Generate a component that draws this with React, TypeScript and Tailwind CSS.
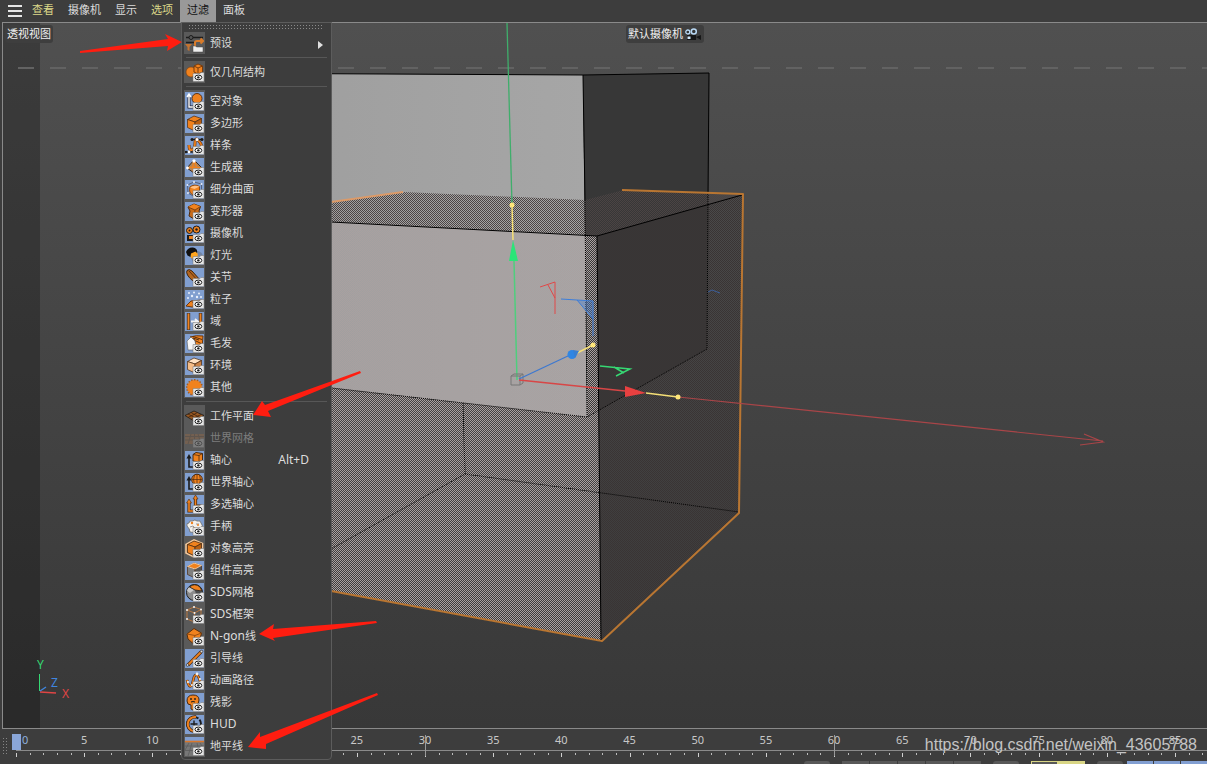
import type { ReactNode } from "react";
import { clsx } from "clsx";

const O = "#f0821e";
const D = "#7a3c0c";
const K = "#1c1c1c";

type Item = {
  label: string;
  latin?: string;
  icon: ReactNode;
  plain?: boolean;
  disabled?: boolean;
  shortcut?: string;
  submenu?: boolean;
};

/* Small eye plate in the corner of every filter icon */
function Eye() {
  return (
    <g>
      <path d="M8 10.5H15L16 9.5H19V18.5H8Z" fill="#e6e6e6" stroke="#777" strokeWidth=".5" />
      <ellipse cx="13.4" cy="14.4" rx="3.4" ry="2.3" fill="#fff" stroke={K} strokeWidth="1" />
      <circle cx="13.4" cy="14.4" r="1.2" fill={K} />
    </g>
  );
}

function Cube({ top = O, left = O, right = "#b85f12" }: { top?: string; left?: string; right?: string }) {
  return (
    <g stroke="#4a2a10" strokeWidth=".7" strokeLinejoin="round">
      <path d="M2.5 5.5 9 2l7.5 2.5L10 8Z" fill={top} />
      <path d="M2.5 5.5 10 8v9L2.5 13.5Z" fill={left} />
      <path d="M10 8l6.5-3.5V13L10 17Z" fill={right} />
    </g>
  );
}

const axisArrow = (
  <g>
    <path d="M4 6V16H9" fill="none" stroke={K} strokeWidth="1.6" />
    <path d="M4 3 1.5 7.5h5Z" fill={K} />
  </g>
);

const groups: Item[][] = [
  [
    {
      label: "预设",
      plain: true,
      submenu: true,
      icon: (
        <g>
          <path d="M1 3.5h17M1 8.5h8" stroke={K} strokeWidth="1.6" />
          <circle cx="6" cy="3.5" r="2" fill="#555" stroke={K} />
          <path d="M0 10h7l-2.5 3v4l-2-1v-3Z" fill="#c47331" />
          <path d="M10 12V8.5Q10 7 12 7h6M15.5 4.5 18 7l-2.5 2.5" fill="none" stroke="#d87b2a" strokeWidth="2" />
          <path d="M8 18V12h2.5l1 1H18v5Z" fill="#eee" stroke="#444" strokeWidth=".5" />
        </g>
      ),
    },
  ],
  [
    {
      label: "仅几何结构",
      plain: true,
      icon: (
        <g>
          <circle cx="6" cy="9" r="5" fill={O} stroke={D} strokeWidth=".6" />
          <path d="M9 3l4-2 4.5 2v6L13 11 9 9Z" fill={O} stroke={D} />
          <path d="M9 3l4 2 4.5-2M13 5v5" stroke={D} fill="none" />
          <Eye />
        </g>
      ),
    },
  ],
  [
    {
      label: "空对象",
      icon: (
        <g>
          <path d="M4 4v11h5" fill="none" stroke="#223" strokeWidth="3" />
          <path d="M4 3v12h5M2 5l2-3 2 3" fill="none" stroke="#fff" strokeWidth="1.4" />
          <circle cx="12" cy="6.5" r="5" fill={O} stroke="#5b3417" />
          <Eye />
        </g>
      ),
    },
    { label: "多边形", icon: <g><Cube /><Eye /></g> },
    {
      label: "样条",
      icon: (
        <g>
          <path d="M4 9q0 6 3 5t3-7 3-3 4 7" fill="none" stroke={D} strokeWidth="3" />
          <path d="M4 9q0 6 3 5t3-7 3-3 4 7" fill="none" stroke={O} strokeWidth="1.7" />
          <path d="M7 3.5h10M0 16h8" stroke={K} strokeWidth="1.3" />
          <circle cx="7" cy="3.5" r="1.5" fill={K} />
          <circle cx="17" cy="3.5" r="1.5" fill={K} />
          <circle cx="12" cy="3.5" r="1.5" fill="#fff" />
          <circle cx="4" cy="16" r="1.4" fill="#fff" />
          <circle cx="1" cy="16" r="1.3" fill={K} />
          <Eye />
        </g>
      ),
    },
    {
      label: "生成器",
      icon: (
        <g>
          <path d="M9 2 2 10l7 5 8-5Z" fill="#ad875f" stroke="#3c2a1a" />
          <path d="M9 2 7.5 10 9 15M9 2l3 8 4 0M2 10l6-1 7 1" stroke={O} strokeWidth="1.5" fill="none" />
          <circle cx="9" cy="3" r="1.7" fill="#fff" />
          <circle cx="2.5" cy="10" r="1.4" fill="#fff" />
          <Eye />
        </g>
      ),
    },
    {
      label: "细分曲面",
      icon: (
        <g>
          <path d="M2.5 5 9 2l7.5 2v9L10 17l-7-4Z" fill="none" stroke="#52617f" />
          <path d="M5 7q4-3.5 9.5-.5V13L9 15.5Q3 13 5 7" fill={O} stroke="#8b4a17" />
          <path d="M5 7.5q4-3 9.5-1L9.5 9Z" fill="#ffc083" />
          <g fill="#e8eefa"><circle cx="2.5" cy="5" r="1" /><circle cx="9" cy="2" r="1" /><circle cx="16.5" cy="4" r="1" /><circle cx="3" cy="13" r="1" /></g>
          <Eye />
        </g>
      ),
    },
    {
      label: "变形器",
      icon: (
        <g>
          <path d="M3 5l6-3 6.5 2.5L14 9l1.5 5L9 17l-5-3 1-5Z" fill="#c96b18" stroke="#4a2a10" />
          <path d="M3 5l6-3 6.5 2.5L10 8Z" fill={O} />
          <path d="M3 5l7 3 5.5-3.5M10 8l-1 9" stroke="#6b370e" strokeWidth=".8" fill="none" />
          <Eye />
        </g>
      ),
    },
    {
      label: "摄像机",
      icon: (
        <g>
          <path d="M2 11h9v6H2Z" fill={K} />
          <path d="M12 12l6-2v5Z" fill={K} />
          <circle cx="4.500" cy="6.500" r="3" fill={O} stroke={K} />
          <circle cx="11.500" cy="5.500" r="3.500" fill={O} stroke={K} />
          <circle cx="4.500" cy="6.500" r="1" fill={K} />
          <circle cx="11.500" cy="5.500" r="1.200" fill={K} />
          <rect x="4" y="12" width="4" height="3" fill={O} />
          <Eye />
        </g>
      ),
    },
    {
      label: "灯光",
      icon: (
        <g>
          <circle cx="12" cy="11" r="6" fill="#555" opacity=".35" />
          <circle cx="9" cy="9" r="3.8" fill="#ffa51e" />
          <path d="M1 6Q3 1 8 1.5q5 1 4 5.5L10.500 5.500 6 7.500 5.500 11 2.500 9.500Z" fill="#111" />
          <Eye />
        </g>
      ),
    },
    {
      label: "关节",
      icon: (
        <g>
          <path d="M2 2.5Q4 .5 7 3l9 10-2 3Q6 13 2.5 7 1 4 2 2.5" fill="#b4661f" stroke="#3e2511" />
          <path d="M4 3l10 11" stroke="#5b2f0c" />
          <Eye />
        </g>
      ),
    },
    {
      label: "粒子",
      icon: (
        <g>
          <path d="M1 16l5-5 11-1v5l-10 2Z" fill={O} stroke="#6b370e" />
          <path d="M6 11l3 3-2 3" fill="none" stroke="#a45510" />
          <g fill="#e8effb">
            <circle cx="4" cy="3" r="1" /><circle cx="9" cy="2.5" r="1" /><circle cx="14" cy="3.5" r="1" />
            <circle cx="3" cy="8" r="1" /><circle cx="7" cy="6" r="1.2" /><circle cx="12" cy="7" r="1.2" /><circle cx="16" cy="7" r="1" />
          </g>
          <Eye />
        </g>
      ),
    },
    {
      label: "域",
      icon: (
        <g>
          <path d="M3.5 1v17M15.5 1v17" stroke="#40342c" strokeWidth="3.4" />
          <path d="M3.5 1.5v16M15.5 1.5v16" stroke={O} strokeWidth="1.8" />
          <path d="M6 9.5h7M10 7l3 2.5-3 2.5" stroke="#f2f2f2" strokeWidth="1.8" fill="none" />
          <Eye />
        </g>
      ),
    },
    {
      label: "毛发",
      icon: (
        <g>
          <path d="M5 3q6-2 13-1l-1 12-6 1-1-9Z" fill={O} stroke="#6b370e" />
          <path d="M8 4l6 2M8 2.5l9 3M11 7l6 3" stroke="#5b2f0c" />
          <path d="M2 7l4-4 4 4 1 5-3 4H3Z" fill="#f5f5f5" stroke="#555" strokeWidth=".6" />
          <Eye />
        </g>
      ),
    },
    { label: "环境", icon: <g><Cube top="#ffe3c4" left="#f5bd88" right="#c98348" /><Eye /></g> },
    {
      label: "其他",
      icon: (
        <g>
          <circle cx="9.5" cy="9.5" r="7.4" fill={O} />
          <circle cx="9.5" cy="9.5" r="7.8" fill="none" stroke="#a85c1c" strokeWidth="1.4" strokeDasharray="1.5 1.5" />
          <Eye />
        </g>
      ),
    },
  ],
  [
    {
      label: "工作平面",
      plain: true,
      icon: (
        <g>
          <path d="M0 8.5 9 4l10 4.5L9 14Z" fill="#9b5a23" stroke={K} strokeWidth=".8" />
          <path d="M3 7l9.5 5M6 5.5 15.5 11M3 10.5 12.5 5.5M6 12.5 16 7.5" stroke="#40230c" strokeWidth=".8" />
          <Eye />
        </g>
      ),
    },
    {
      label: "世界网格",
      plain: true,
      disabled: true,
      icon: (
        <g>
          <path d="M0 5h19v10H0Z" fill="#c07338" />
          <path d="M0 7.5h19M0 11h19M6 5 3 15M13 5l3 10M9.5 5v10" stroke="#6b4a2c" />
          <Eye />
        </g>
      ),
    },
    {
      label: "轴心",
      shortcut: "Alt+D",
      icon: (
        <g>
          {axisArrow}
          <path d="M8 3.5 11 1.5l6.5 1V9L14 11l-6-1Z" fill={O} stroke="#4a2a10" />
          <path d="M8 3.5l6 1 3.5-2M14 4.5V11" stroke="#4a2a10" strokeWidth=".8" fill="none" />
          <Eye />
        </g>
      ),
    },
    {
      label: "世界轴心",
      icon: (
        <g>
          {axisArrow}
          <circle cx="12" cy="6.5" r="5.3" fill={O} stroke="#4a2a10" />
          <path d="M7 6.5h10M12 1v11M9.5 2q-2 5 0 9M14.5 2q2 5 0 9" stroke="#4a2a10" strokeWidth=".7" fill="none" />
          <Eye />
        </g>
      ),
    },
    {
      label: "多选轴心",
      icon: (
        <g>
          <path d="M4 7v9h7M10.5 3v8H17" fill="none" stroke="#4a2a10" strokeWidth="3.2" />
          <path d="M1.5 8 4 4l2.5 4ZM8 4l2.5-4L13 4Z" fill={O} stroke="#4a2a10" strokeWidth=".6" />
          <path d="M4 7v9h7M10.5 3v8H17" fill="none" stroke={O} strokeWidth="1.6" />
          <Eye />
        </g>
      ),
    },
    {
      label: "手柄",
      icon: (
        <g>
          <path d="M2 9q-1-3 2-3 0-3 3.5-2Q10 2 12 4q4-1 4 2 2 2 1 5l-4 5-8-1q0-3-3-6" fill="#f4f1ec" stroke="#6a6a6a" strokeWidth=".8" />
          <path d="M5 10l3-1 2 2M11 7l3 0" stroke="#999" fill="none" />
          <circle cx="7" cy="6" r="1.2" fill={O} /><circle cx="13" cy="8" r="1" fill={O} /><circle cx="9" cy="11" r="1" fill={O} />
          <Eye />
        </g>
      ),
    },
    {
      label: "对象高亮",
      plain: true,
      icon: (
        <g>
          <path d="M1 5.5 9 1l8.5 3.5V14L10 18.5 1 14Z" fill="none" stroke="#f3c79a" strokeWidth="1.6" />
          <Cube />
          <Eye />
        </g>
      ),
    },
    {
      label: "组件高亮",
      icon: (
        <g>
          <Cube left="#808080" right="#555" />
          <path d="M2.5 5.5 9 2l7.5 2.5L10 8Z" fill={O} stroke="#f6dcc0" strokeWidth=".8" />
          <Eye />
        </g>
      ),
    },
    {
      label: "网格",
      latin: "SDS",
      icon: (
        <g>
          <circle cx="9.5" cy="9.5" r="8" fill="#8c8c8c" stroke={K} />
          <path d="M2 8Q3 4 5 4l4 3-4 3Z" fill="#c9c9c9" />
          <path d="M10 7l7 1.5q1 5-5 8.500Z" fill="#4c4c4c" />
          <path d="M4.500 4q5-4.500 10.500 0l2 4-7-1Z" fill={O} stroke={K} strokeWidth=".8" />
          <Eye />
        </g>
      ),
    },
    {
      label: "框架",
      latin: "SDS",
      plain: true,
      icon: (
        <g>
          <path d="M2 5 9 2l7 2.5v9L9.5 17 2 14ZM2 5l7.5 3L16 4.500M9.500 8v9" fill="none" stroke="#b8763f" />
          <g fill="#f3f3f3"><circle cx="2" cy="5" r="1" /><circle cx="9" cy="2" r="1" /><circle cx="16" cy="4.5" r="1" /><circle cx="9.5" cy="8" r="1" /><circle cx="2" cy="14" r="1" /></g>
          <Eye />
        </g>
      ),
    },
    {
      label: "线",
      latin: "N-gon",
      plain: true,
      icon: (
        <g>
          <path d="M2 7 9 1.5 16.5 6l-2 8-7 2L3 12Z" fill={O} stroke="#5b2f0c" />
          <path d="M2 7l8 1.5L16.5 6M10 8.5 7.5 16" stroke="#9a4f10" fill="none" />
          <Eye />
        </g>
      ),
    },
    {
      label: "引导线",
      icon: (
        <g>
          <path d="M3 16 16 3" stroke="#4a2a10" strokeWidth="3.2" />
          <path d="M3 16 16 3" stroke={O} strokeWidth="1.8" />
          <circle cx="2.5" cy="16" r="1.3" fill="#ddd" stroke={K} strokeWidth=".6" />
          <circle cx="16.5" cy="2.5" r="1.3" fill="#ddd" stroke={K} strokeWidth=".6" />
          <Eye />
        </g>
      ),
    },
    {
      label: "动画路径",
      icon: (
        <g>
          <path d="M2 9q2 9 5 5l2-8q3-6 6 4v4" fill="none" stroke="#4a2a10" strokeWidth="2.6" />
          <path d="M2 9q2 9 5 5l2-8q3-6 6 4v4" fill="none" stroke={O} strokeWidth="1.5" />
          <g fill="#f1f1f1"><circle cx="3" cy="11" r="1.1" /><circle cx="7" cy="14" r="1.1" /><circle cx="12" cy="3" r="1.4" /><circle cx="15" cy="8" r="1.1" /></g>
          <Eye />
        </g>
      ),
    },
    {
      label: "残影",
      icon: (
        <g>
          <path d="M2 8q0-6 6-6t6 5q0 4-3 5l-3 5-2-1 0-4q-4 0-4-4" fill={O} stroke="#4a2a10" />
          <circle cx="6" cy="6" r=".9" fill={K} /><circle cx="10" cy="6" r=".9" fill={K} />
          <path d="M6 9q2-1 4 0" stroke={K} fill="none" />
          <Eye />
        </g>
      ),
    },
    {
      label: "",
      latin: "HUD",
      icon: (
        <g>
          <circle cx="9" cy="9" r="7" fill="none" stroke={K} strokeWidth="2" strokeDasharray="5 1.5" />
          <path d="M11 2A7.2 7.2 0 1 0 9 16.3" fill="none" stroke="#4a2a10" strokeWidth="3.4" />
          <path d="M11 2A7.2 7.2 0 1 0 9 16.3" fill="none" stroke={O} strokeWidth="2" />
          <path d="M5.5 9h7M9 5.5v7" stroke={K} strokeWidth="1.4" />
          <Eye />
        </g>
      ),
    },
    {
      label: "地平线",
      icon: (
        <g>
          <path d="M0 4h19v15H0Z" fill="#777" />
          <path d="M0 4.5h19" stroke="#d9772a" strokeWidth="1.6" />
          <path d="M0 9h19M0 13.5h19M7 6 3 19M12 6l3 13M4 6 0 13M15 6l4 6" stroke="#5c5c5c" strokeWidth=".8" />
          <Eye />
        </g>
      ),
    },
  ],
];

function MenuItem({ item }: { item: Item }) {
  return (
    <li role="none">
      <button
        type="button"
        role="menuitem"
        disabled={item.disabled}
        className="flex h-[22px] w-full items-center pr-[6px] text-left hover:bg-[#4a4a4a]"
      >
        <span className="flex h-[22px] w-[21px] items-center justify-center bg-[#5a5a5a]">
          <svg
            viewBox="0 0 19 19"
            className={clsx("h-[19px] w-[19px]", item.plain ? "bg-[#5a5a5a]" : "bg-[#819fd0]", item.disabled && "opacity-25")}
            aria-hidden="true"
          >
            {item.icon}
          </svg>
        </span>
        <span className={clsx("ml-[5px] flex-1 whitespace-nowrap", item.disabled ? "text-[#7c7c7c]" : "text-[#dcdcdc]")}>
          {item.latin && <span className="text-[12px]">{item.latin}</span>}
          {item.label}
        </span>
        {item.shortcut && <span className="mr-[14px] text-[12px] text-[#dcdcdc]">{item.shortcut}</span>}
        {item.submenu && (
          <svg viewBox="0 0 5 8" className="mt-1 h-2 w-[5px]" aria-hidden="true">
            <path d="M0 0 5 4 0 8Z" fill="#e0e0e0" />
          </svg>
        )}
      </button>
    </li>
  );
}

function FilterMenu() {
  return (
    <div
      role="menu"
      aria-label="过滤"
      className="absolute top-full left-px z-10 w-[151px] rounded-b border border-[#5c5c5c] bg-[#3d3d3d] px-[2px] pt-[2px] pb-[2px]"
    >
      {/* Tear-off grip */}
      <div className="mx-[5px] mb-[3px] flex flex-col gap-[2px]">
        <div className="h-px bg-[linear-gradient(90deg,#8a8a8a_1px,transparent_1px)] bg-[length:3px_1px]" />
        <div className="h-px bg-[linear-gradient(90deg,#8a8a8a_1px,transparent_1px)] bg-[length:3px_1px]" />
      </div>
      {groups.map((group, i) => (
        <div key={i}>
          {i > 0 && (
            <div className="flex h-[7px] items-center">
              <hr className="mx-[2px] w-full border-[#575757]" />
            </div>
          )}
          <ul role="none">
            {group.map((item) => (
              <MenuItem key={(item.latin ?? "") + item.label} item={item} />
            ))}
          </ul>
        </div>
      ))}
    </div>
  );
}

const menus = [
  { label: "查看", accent: true },
  { label: "摄像机" },
  { label: "显示" },
  { label: "选项", accent: true },
  { label: "过滤", open: true },
  { label: "面板" },
];

function MenuBar() {
  return (
    <header className="flex h-[22px] items-center bg-[#3d3d3d] pl-2">
      <button type="button" aria-label="菜单" className="mr-[3px] flex w-[14px] flex-col gap-[3px]">
        <span className="h-[2px] bg-[#e6e6e6]" />
        <span className="h-[2px] bg-[#e6e6e6]" />
        <span className="h-[2px] bg-[#e6e6e6]" />
      </button>
      <nav className="flex">
        {menus.map((m) => (
          <div key={m.label} className="relative">
            <button
              type="button"
              aria-expanded={m.open}
              className={clsx(
                "h-[22px] px-[7px] pb-[2px]",
                m.open ? "bg-[#999] text-[#111]" : m.accent ? "text-[#dcd98a]" : "text-[#dcdcdc]",
              )}
            >
              {m.label}
            </button>
            {m.open && <FilterMenu />}
          </div>
        ))}
      </nav>
    </header>
  );
}

function Scene() {
  return (
    <svg viewBox="3 23 1204 705" preserveAspectRatio="xMinYMin slice" className="absolute inset-0 h-full w-full" aria-hidden="true">
      <defs>
        <pattern id="front" width="2" height="2" patternUnits="userSpaceOnUse" shapeRendering="crispEdges">
          <path d="M0 0h1v1H0ZM1 1h1v1H1Z" fill="#aaa0a0" />
        </pattern>
        <pattern id="top" width="2" height="2" patternUnits="userSpaceOnUse" shapeRendering="crispEdges">
          <path d="M0 0h1v1H0ZM1 1h1v1H1Z" fill="#4c4444" />
        </pattern>
        <pattern id="side" width="2" height="2" patternUnits="userSpaceOnUse" shapeRendering="crispEdges">
          <path d="M0 0h1v1H0ZM1 1h1v1H1Z" fill="#3a3434" />
        </pattern>
        <linearGradient id="wall" x1="0" y1="0" x2="1" y2="0">
          <stop offset="0" stopColor="#9c9c9c" />
          <stop offset="1" stopColor="#a6a6a6" />
        </linearGradient>
      </defs>

      {/* Left margin and safe frame */}
      <path d="M3 23h37v705H3Z" fill="#000" opacity=".25" />
      <path d="M18 68H1207" stroke="#626262" strokeWidth="2" strokeDasharray="16 16" />

      {/* Rear box */}
      <path d="M181 73 583 75 587 417 181 370Z" fill="url(#wall)" />
      <path d="M583 75 709 73 707 349 587 417Z" fill="#373737" />
      <path d="M181 73 583 75 709 73 708 197M583 75 585 200" fill="none" stroke="#000" />

      {/* Selected box */}
      <path d="M181 222 403 192 585 200 624 190 743 195 597 236 331 222Z" fill="url(#top)" />
      <path d="M331 222 597 236 601 641 331 591Z" fill="url(#front)" />
      <path d="M597 236 743 195 739 512 601 641Z" fill="url(#side)" />
      <path d="M331 222 597 236 742 195M597 236 601 641 331 591" fill="none" stroke="#000" />
      <path
        d="M708 197 707 349 587 417 331 388M585 200 587 417M463 403 465 474 331 549M465 474 739 512"
        fill="none"
        stroke="#000"
        strokeDasharray="1 1"
      />
      <path d="M331 202 403 192" stroke="#dc9a68" strokeWidth="2" />
      <path d="M622 190 743 194 739 513 602 641 331 591" fill="none" stroke="#b97632" strokeWidth="2" strokeLinejoin="round" />

      {/* Band handles */}
      <path d="M540 287 555 282V314M548 285l7 13" fill="none" stroke="#e04848" />
      <path d="M561 299 593 301V336M577 300l16 19" fill="none" stroke="#3c7edb" />
      <path d="M577 300 593 301V319Z" fill="#4480d8" opacity=".4" />
      <path d="M600 366 630 369 616 376M614 367l10 6" fill="none" stroke="#36d873" strokeWidth="1.5" />
      <path d="M708 292l4-2 8 3" fill="none" stroke="#3c5f9c" />

      {/* Move gizmo */}
      <path d="M507 23 512 205" stroke="#3fae6b" strokeWidth="1.3" />
      <path d="M512 205 513 240" stroke="#f5df76" strokeWidth="1.5" />
      <path d="M514 261 517 380" stroke="#4fce7d" strokeWidth="1.5" />
      <path d="M513 240 509 261H518Z" fill="#2be578" />
      <path d="M511 376h9v9h-9ZM511 376l3-2h9v9l-3 2M520 376l3-2" fill="none" stroke="#777" />
      <path d="M519 379 570 355" stroke="#3c78d0" strokeWidth="1.3" />
      <path d="M519 380 625 391" stroke="#d84646" strokeWidth="1.3" />
      <path d="M678 397 1103 441M1084 434l19 8-23 3" fill="none" stroke="#a94548" strokeWidth="1.2" />
      <path d="M577 353 593 345M646 393 678 397" stroke="#f5df76" strokeWidth="1.5" />
      <circle cx="572" cy="354.5" r="4.5" fill="#2f86e4" />
      <path d="M573 350l6 1-4 7Z" fill="#3a7fd0" />
      <path d="M625 386 646 393 625 397Z" fill="#e84040" />
      <g fill="#ffe67a">
        <circle cx="512" cy="205" r="2.5" />
        <circle cx="593" cy="345" r="2.5" />
        <circle cx="678" cy="397" r="2.5" />
      </g>

      {/* Axis tripod */}
      <path d="M39.5 674v17" stroke="#35d873" />
      <path d="M40 692l16 1" stroke="#e04545" strokeWidth="1.3" />
      <path d="M40 691l6-4" stroke="#3f86e0" strokeWidth="1.3" />
      <g fontSize="12" fontFamily="Noto Sans, sans-serif">
        <text x="37" y="669" fill="#35d873">Y</text>
        <text x="51" y="687" fill="#3f86e0">Z</text>
        <text x="62" y="698" fill="#e04545">X</text>
      </g>
    </svg>
  );
}

function Viewport() {
  return (
    <main className="relative ml-[2px] flex-1 overflow-hidden border-y border-l border-[#8a8a8a] bg-linear-to-b from-[#505050] to-[#383838]">
      <Scene />
      <h1 className="absolute top-[2px] left-[2px] rounded-[3px] bg-[#3e3e3e] px-[2px] leading-[18px] text-[#f0f0f0]">
        透视视图
      </h1>
      <div className="absolute top-[2px] left-[calc(50%+21px)] flex items-center gap-[2px] rounded-[3px] bg-[#3e3e3e] px-[2px] leading-[18px] text-[#f0f0f0]">
        默认摄像机
        <svg viewBox="0 0 17 13" className="h-[13px] w-[17px]" aria-hidden="true">
          <path d="M2 7h9v5H2ZM11 9l5-2v5Z" fill="#161616" />
          <circle cx="2.8" cy="4" r="2" fill="#333" stroke="#b9d9f5" strokeWidth="1.3" />
          <circle cx="8.8" cy="3.5" r="2.5" fill="#333" stroke="#b9d9f5" strokeWidth="1.5" />
          <path d="M2.5 8.5h3V11h-3Z" fill="#cfe6fa" />
        </svg>
      </div>
    </main>
  );
}

const marks = Array.from({ length: 18 }, (_, i) => i * 5);

function Timeline() {
  return (
    <footer className="h-[35px] overflow-hidden bg-[#3d3d3d]">
      <div className="flex h-[32px]">
        <div className="mt-2 ml-[2px] h-[18px] w-[6px] bg-[radial-gradient(#858585_1px,transparent_1px)] bg-[length:3px_3px]" />
        <div className="mt-[5px] ml-1 h-4 w-1 bg-[#8aa6d8]" />
        <ol className="-mr-9 flex flex-1 text-[#c8c8c8]">
          {marks.map((m) => (
            <li key={m} className="relative flex min-w-0 flex-1 flex-col">
              <span className="flex h-[22px] items-center border-b border-[#8a8a8a]">
                {m === 0 ? (
                  <>
                    <span className="h-4 w-[5px] self-end bg-[#8aa6d8]" />
                    <span className="ml-px text-[#8fb0dd]">0</span>
                  </>
                ) : (
                  <span className="-translate-x-1/2">{m}</span>
                )}
              </span>
              <span className="mt-[2px] flex h-[4px]">
                <i className="h-[4px] flex-1 border-l border-[#d0d0d0]" />
                <i className="h-[2px] flex-1 border-l border-[#bdbdbd]" />
                <i className="h-[2px] flex-1 border-l border-[#bdbdbd]" />
                <i className="h-[2px] flex-1 border-l border-[#bdbdbd]" />
                <i className="h-[2px] flex-1 border-l border-[#bdbdbd]" />
              </span>
              {/* Second markers */}
              {m > 0 && m % 30 === 0 && <i className="absolute top-[6px] left-0 h-[21px] w-px bg-[#9a9a9a]" />}
            </li>
          ))}
        </ol>
      </div>
      {/* Transport buttons */}
      <div className="flex h-[3px] justify-end gap-3">
        <button type="button" aria-label="开始" className="w-[26px] rounded-t bg-[#585858]" />
        <div className="flex gap-px">
          {["上一关键帧", "上一帧", "播放", "下一帧", "下一关键帧"].map((l) => (
            <button key={l} type="button" aria-label={l} className="w-[27px] bg-[#585858]" />
          ))}
        </div>
        <button type="button" aria-label="结束" className="w-[26px] rounded-t bg-[#585858]" />
        <div className="flex">
          <button type="button" aria-label="自动" className="w-[27px] border-x border-t border-[#d9d685] bg-[#585858]" />
          <button type="button" aria-label="循环" className="w-[27px] bg-[#d9d685]" />
        </div>
        <button type="button" aria-label="记录" className="w-[26px] rounded-t bg-[#585858]" />
        <div className="-ml-2 flex gap-px">
          {["位置", "缩放", "旋转"].map((l) => (
            <button key={l} type="button" aria-label={l} className="w-[26px] bg-[#829fd2]" />
          ))}
        </div>
      </div>
    </footer>
  );
}

/* Red pointers laid over the menu */
function Pointers() {
  return (
    <svg viewBox="0 0 400 764" className="pointer-events-none absolute top-0 left-0 z-20 h-[764px] w-[400px]" fill="#ff1d10" aria-hidden="true">
      <path d="M80 51 168 39 165 34 182 42 167 51 168 46 80 53Z" />
      <path d="M253 415 262 401 265 405 360 371 361 373 268 411 271 417Z" />
      <path d="M259 634 274 624 273 629 376 621 377 623 273 638 275 641Z" />
      <path d="M248 747 260 732 260 737 377 693 378 695 266 744 266 749Z" />
    </svg>
  );
}

export default function App() {
  return (
    <div className="relative flex min-h-screen flex-col overflow-hidden bg-[#3d3d3d] font-['Noto_Sans','Noto_Sans_CJK_SC',sans-serif] text-[11px] leading-4">
      <MenuBar />
      <Viewport />
      <Timeline />
      <Pointers />
      <p className="pointer-events-none absolute right-[10px] bottom-[7px] font-['Liberation_Sans',sans-serif] text-[16px] leading-6 text-[#c4c4c4]">
        https://blog.csdn.net/weixin_43605788
      </p>
    </div>
  );
}
